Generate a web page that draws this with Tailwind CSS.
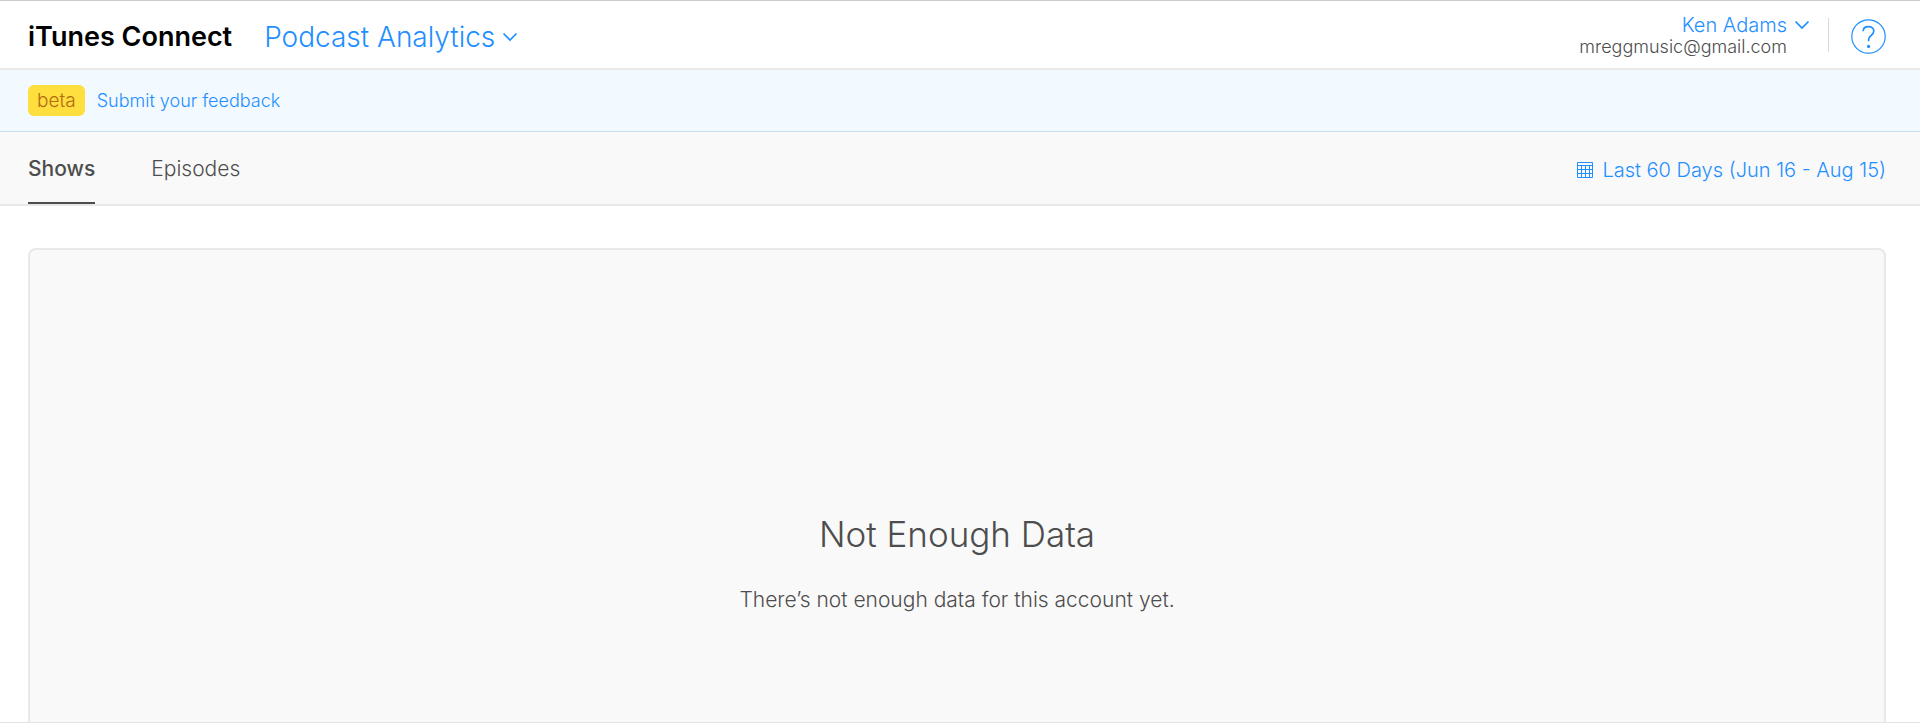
<!DOCTYPE html>
<html lang="en">
<head>
  <meta charset="UTF-8" />
  <meta name="viewport" content="width=device-width, initial-scale=1.0" />
  <title>Podcast Analytics - iTunes Connect</title>
  <script src="https://cdn.jsdelivr.net/npm/@tailwindcss/browser@4"></script>
</head>

<body class="h-screen overflow-hidden flex flex-col bg-white font-['Inter','Liberation_Sans',sans-serif] font-light text-[#4d4d4d]">
  <!-- Header -->
  <header class="h-[70px] shrink-0 flex items-center justify-between pl-7 pr-[34px] border-t border-t-[#cccccc] border-b-2 border-b-[#e8e8e8]">
    <div class="flex items-center pt-1">
      <h1 class="text-[27px] leading-8 font-semibold text-black">iTunes Connect</h1>
      <button class="ml-8 flex items-center gap-[7px] text-[28px] leading-8 text-[#1f8fff]">
        Podcast Analytics
        <svg class="w-4 h-4" viewBox="0 0 16 16" fill="none" stroke="currentColor" stroke-width="1.7" aria-hidden="true"><path d="M1.500 4.500 8 11l6.500-6.500" /></svg>
      </button>
    </div>

    <div class="flex items-center">
      <div class="grid grid-cols-[auto_auto] gap-x-[7px] text-right">
        <button class="col-span-2 flex items-center justify-end gap-[7px] text-xl leading-6 text-[#1f8fff]">
          Ken Adams
          <svg class="w-4 h-4" viewBox="0 0 16 16" fill="none" stroke="currentColor" stroke-width="1.7" aria-hidden="true"><path d="M1.500 4.500 8 11l6.500-6.500" /></svg>
        </button>
        <span class="text-lg leading-5">mreggmusic@gmail.com</span>
        <span class="w-4"></span>
      </div>
      <span class="ml-[18px] w-px h-[34px] bg-[#d9d9d9]"></span>
      <button class="ml-[22px] pt-1 text-[#1f8fff]" aria-label="Help">
        <svg class="w-[35px] h-[35px]" viewBox="0 0 35 35" fill="none" stroke="currentColor">
          <circle cx="17.500" cy="17.500" r="16.700" stroke-width="1.200" />
          <path d="M12.200 12.200c0-2.700 2.200-4.500 5.300-4.500s5.300 1.800 5.300 4.400c0 2.200-1.200 3.400-2.900 4.600-1.600 1.200-2.300 2.100-2.300 4v1.500" stroke-width="1.700" />
          <circle cx="17.600" cy="27.400" r="1.600" fill="currentColor" stroke="none" />
        </svg>
      </button>
    </div>
  </header>

  <!-- Beta notice -->
  <div class="h-[62px] shrink-0 flex items-center pl-7 pr-[34px] bg-[#f2f9ff] border-b border-[#c3e0f8]">
    <span class="h-[31px] px-[9px] pt-px flex items-center rounded-md bg-[#ffdf3d] text-[19px] text-[#b36b12]">beta</span>
    <a href="#" class="ml-3 pt-px text-lg text-[#1f8fff]">Submit your feedback</a>
  </div>

  <!-- Tabs and date range -->
  <div class="h-[74px] shrink-0 flex items-stretch justify-between pl-7 pr-[34px] bg-[#f9f9f9] border-b-2 border-[#e8e8e8]">
    <nav class="flex gap-14 text-[21px]">
      <a href="#" class="flex items-center pt-1 border-b-2 border-[#4d4d4d] font-medium" aria-current="page">Shows</a>
      <a href="#" class="flex items-center pt-1 border-b-2 border-transparent">Episodes</a>
    </nav>
    <button class="flex items-center gap-[9px] pt-1 text-xl text-[#1f8fff]">
      <svg class="w-4 h-4" viewBox="0 0 16 16" fill="none" stroke="currentColor" aria-hidden="true">
        <path d="M.5.5h15v15H.5zM.5 3.500h15M.5 7.500h15M.5 11.500h15M4.500 3.500v12M8.500 3.500v12M12.500 3.500v12" />
      </svg>
      Last 60 Days (Jun 16 - Aug 15)
    </button>
  </div>

  <!-- Content -->
  <main class="flex-1 min-h-0 overflow-hidden pl-7 pr-[34px] pt-[42px] border-b border-[#e3e3e3]">
    <section class="min-h-[720px] pt-64 rounded-lg border-2 border-[#e8e8e8] bg-[#f9f9f9] text-center">
      <h2 class="text-[35px] leading-[56px]">Not Enough Data</h2>
      <p class="mt-6 text-[21px] leading-7">There’s not enough data for this account yet.</p>
    </section>
  </main>
</body>
</html>
